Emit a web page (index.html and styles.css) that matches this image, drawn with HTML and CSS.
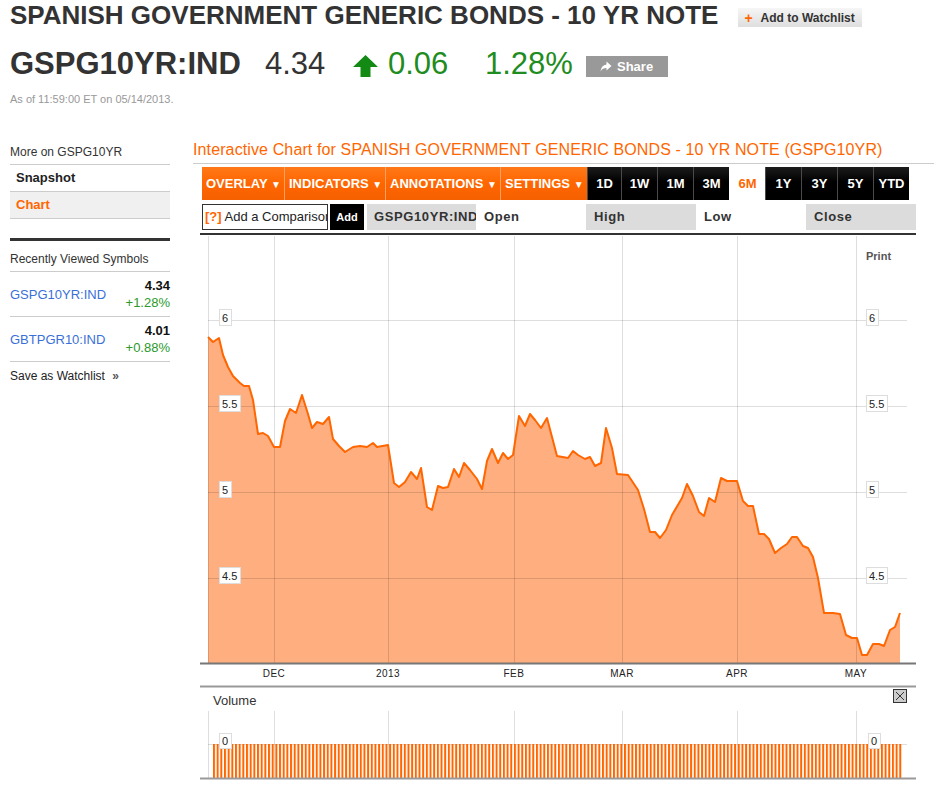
FILE: index.html
```html
<!DOCTYPE html>
<html lang="en">
<head>
  <meta charset="UTF-8">
  <meta name="viewport" content="width=device-width, initial-scale=1.0">
  <title>GSPG10YR:IND Interactive Chart</title>
  <link rel="stylesheet" href="styles.css">
</head>
<body>
  <div class="page">
    <header class="quote-head">
      <div class="title-row">
        <h1>SPANISH GOVERNMENT GENERIC BONDS - 10 YR NOTE</h1>
        <button class="watch-btn"><span class="plus">+</span>Add to Watchlist</button>
      </div>
      <div class="price-row">
        <span class="ticker">GSPG10YR:IND</span>
        <span class="last">4.34</span>
        <svg class="up-arrow" width="25" height="22" viewBox="0 0 25 22">
          <polygon points="12.5,0 25,12 17.5,12 17.5,22 7.5,22 7.5,12 0,12" fill="#138a13"/>
        </svg>
        <span class="change">0.06</span>
        <span class="pct">1.28%</span>
        <button class="share-btn">
          <svg width="12" height="11" viewBox="0 0 12 11">
            <path d="M6.5 0.5 L11.5 5 L6.5 9.5 V7 C3.8 7 2 7.8 0.5 10.5 C1 6.5 3 4 6.5 3.6 Z" fill="#fff"/>
          </svg>Share
        </button>
      </div>
      <p class="asof">As of 11:59:00 ET on 05/14/2013.</p>
    </header>

    <div class="content">
      <aside class="sidebar">
        <div class="side-head">More on GSPG10YR</div>
        <a class="side-link">Snapshot</a>
        <a class="side-link active">Chart</a>

        <div class="recent-head">Recently Viewed Symbols</div>
        <div class="recent-row">
          <a class="sym">GSPG10YR:IND</a>
          <div class="quote">
            <strong>4.34</strong>
            <span class="up">+1.28%</span>
          </div>
        </div>
        <div class="recent-row">
          <a class="sym">GBTPGR10:IND</a>
          <div class="quote">
            <strong>4.01</strong>
            <span class="up">+0.88%</span>
          </div>
        </div>
        <div class="save">Save as Watchlist <span class="raquo">&raquo;</span></div>
      </aside>

      <main class="chart-col">
        <h2 class="chart-title">Interactive Chart for SPANISH GOVERNMENT GENERIC BONDS - 10 YR NOTE (GSPG10YR)</h2>

        <div class="toolbar">
          <span class="tb-menu w-overlay">OVERLAY <i>&#9660;</i></span>
          <span class="tb-menu w-indicators">INDICATORS <i>&#9660;</i></span>
          <span class="tb-menu w-annotations">ANNOTATIONS <i>&#9660;</i></span>
          <span class="tb-menu w-settings">SETTINGS <i>&#9660;</i></span>
          <span class="tb-range narrow">1D</span>
          <span class="tb-range">1W</span>
          <span class="tb-range">1M</span>
          <span class="tb-range">3M</span>
          <span class="tb-range current">6M</span>
          <span class="tb-range">1Y</span>
          <span class="tb-range">3Y</span>
          <span class="tb-range">5Y</span>
          <span class="tb-range">YTD</span>
        </div>

        <div class="compare">
          <div class="compare-input"><span class="help">[?]</span> Add a Comparison</div>
          <span class="add-btn">Add</span>
          <span class="cell shade sym-cell">GSPG10YR:IND</span>
          <span class="cell">Open</span>
          <span class="cell shade">High</span>
          <span class="cell">Low</span>
          <span class="cell shade">Close</span>
        </div>

        <svg class="chart" width="716" height="547" viewBox="200 235 716 547">
          <defs>
            <pattern id="bars" x="213" y="0" width="3.67" height="100" patternUnits="userSpaceOnUse">
              <rect x="0" y="0" width="2" height="100" fill="#ff6600"/>
            </pattern>
          </defs>

          <!-- price area -->
          <polygon class="area" points="208,663 208,337 213,342 219,338 223,355 228,367 233,376 240,383 244,386 249,386 253,400 258,434 263,433 268,436 274,447 280,447 285,421 290,409 296,413 302,395 308,414 312,428 317,422 323,424 329,417 333,439 339,446 345,452 353,447 360,446 367,447 373,443 377,447 388,445 394,483 399,487 405,482 411,472 417,479 421,468 427,507 432,510 438,486 443,488 448,487 454,469 459,477 464,463 470,470 477,479 482,489 487,461 492,449 498,463 503,453 508,459 513,455 519,416 525,426 530,414 535,420 541,428 547,418 557,456 568,458 573,451 578,455 585,459 590,457 595,466 601,463 606,428 612,448 617,474 628,475 638,490 644,509 650,532 655,532 660,538 666,530 672,515 682,498 687,484 693,496 699,512 704,516 709,498 715,502 721,478 727,481 737,481 743,501 748,506 753,506 759,534 764,534 769,539 775,553 781,548 787,544 792,537 797,537 803,546 808,548 813,557 818,578 824,613 833,613 840,614 846,635 852,638 857,638 862,655 867,655 873,644 879,644 884,646 890,630 895,627 900,613 900,663"/>

          <!-- grid -->
          <g class="grid">
            <line x1="208.5" y1="236" x2="208.5" y2="663"/>
            <line x1="274.5" y1="236" x2="274.5" y2="663"/>
            <line x1="388.5" y1="236" x2="388.5" y2="663"/>
            <line x1="514.5" y1="236" x2="514.5" y2="663"/>
            <line x1="622.5" y1="236" x2="622.5" y2="663"/>
            <line x1="737.5" y1="236" x2="737.5" y2="663"/>
            <line x1="856.5" y1="236" x2="856.5" y2="663"/>
            <line x1="208" y1="320.5" x2="907" y2="320.5"/>
            <line x1="208" y1="406.5" x2="907" y2="406.5"/>
            <line x1="208" y1="492.5" x2="907" y2="492.5"/>
            <line x1="208" y1="578.5" x2="907" y2="578.5"/>
          </g>

          <polyline class="price" points="208,337 213,342 219,338 223,355 228,367 233,376 240,383 244,386 249,386 253,400 258,434 263,433 268,436 274,447 280,447 285,421 290,409 296,413 302,395 308,414 312,428 317,422 323,424 329,417 333,439 339,446 345,452 353,447 360,446 367,447 373,443 377,447 388,445 394,483 399,487 405,482 411,472 417,479 421,468 427,507 432,510 438,486 443,488 448,487 454,469 459,477 464,463 470,470 477,479 482,489 487,461 492,449 498,463 503,453 508,459 513,455 519,416 525,426 530,414 535,420 541,428 547,418 557,456 568,458 573,451 578,455 585,459 590,457 595,466 601,463 606,428 612,448 617,474 628,475 638,490 644,509 650,532 655,532 660,538 666,530 672,515 682,498 687,484 693,496 699,512 704,516 709,498 715,502 721,478 727,481 737,481 743,501 748,506 753,506 759,534 764,534 769,539 775,553 781,548 787,544 792,537 797,537 803,546 808,548 813,557 818,578 824,613 833,613 840,614 846,635 852,638 857,638 862,655 867,655 873,644 879,644 884,646 890,630 895,627 900,613"/>

          <!-- y labels -->
          <g class="ylabel">
            <rect x="219.5" y="309.5" width="12" height="16"/><text x="222" y="322">6</text>
            <rect x="219.5" y="395.5" width="21" height="16"/><text x="222" y="408">5.5</text>
            <rect x="219.5" y="481.5" width="12" height="16"/><text x="222" y="494">5</text>
            <rect x="219.5" y="567.5" width="21" height="16"/><text x="222" y="580">4.5</text>
            <rect x="866.5" y="309.5" width="12" height="16"/><text x="869" y="322">6</text>
            <rect x="866.5" y="395.5" width="21" height="16"/><text x="869" y="408">5.5</text>
            <rect x="866.5" y="481.5" width="12" height="16"/><text x="869" y="494">5</text>
            <rect x="866.5" y="567.5" width="21" height="16"/><text x="869" y="580">4.5</text>
          </g>
          <text class="print" x="866" y="260">Print</text>

          <!-- x axis -->
          <line class="axis" x1="200" y1="663.5" x2="916" y2="663.5"/>
          <g class="xlabel">
            <text x="274" y="677">DEC</text>
            <text x="388" y="677">2013</text>
            <text x="514" y="677">FEB</text>
            <text x="622" y="677">MAR</text>
            <text x="737" y="677">APR</text>
            <text x="856" y="677">MAY</text>
          </g>

          <!-- volume panel -->
          <line class="panel-edge" x1="200" y1="686.5" x2="916" y2="686.5"/>
          <text class="vol-title" x="213" y="705">Volume</text>
          <g class="close-box">
            <rect x="893.5" y="689.5" width="13" height="13"/>
            <path d="M896 692 L904 700 M904 692 L896 700"/>
          </g>
          <g class="grid">
            <line x1="208.5" y1="711" x2="208.5" y2="778"/>
            <line x1="274.5" y1="711" x2="274.5" y2="778"/>
            <line x1="388.5" y1="711" x2="388.5" y2="778"/>
            <line x1="514.5" y1="711" x2="514.5" y2="778"/>
            <line x1="622.5" y1="711" x2="622.5" y2="778"/>
            <line x1="737.5" y1="711" x2="737.5" y2="778"/>
            <line x1="856.5" y1="711" x2="856.5" y2="778"/>
            <line x1="208" y1="744.5" x2="907" y2="744.5"/>
          </g>
          <rect x="213" y="744" width="690" height="34" fill="url(#bars)"/>
          <g class="ylabel">
            <rect x="219.5" y="733.5" width="12" height="15"/><text x="222" y="745">0</text>
            <rect x="868.5" y="733.5" width="12" height="15"/><text x="871" y="745">0</text>
          </g>
          <line class="panel-edge" x1="200" y1="778.5" x2="916" y2="778.5"/>
        </svg>
      </main>
    </div>
  </div>
</body>
</html>
```

FILE: styles.css
```css
/* General */
body {
  margin: 0;
  font-family: 'Liberation Sans', Arial, sans-serif;
  color: #333;
  background: #fff;
}

.page {
  width: 934px;
}

/* Quote header */
.quote-head {
  padding: 0 10px;
}

.title-row {
  display: flex;
  align-items: flex-start;
}

h1 {
  margin: 0;
  font-family: 'Liberation Sans Narrow', 'Arial Narrow', 'Liberation Sans', sans-serif;
  font-size: 26px;
  line-height: 30px;
  font-weight: bold;
  color: #333;
  white-space: nowrap;
}

.watch-btn {
  margin: 8px 0 0 20px;
  height: 19px;
  width: 124px;
  padding: 0 0 0 6px;
  display: flex;
  align-items: center;
  border: none;
  background: linear-gradient(#f6f6f6, #dedede);
  font-family: 'Liberation Sans Narrow', 'Arial Narrow', 'Liberation Sans', sans-serif;
  font-size: 12px;
  font-weight: bold;
  color: #333;
}

.watch-btn .plus {
  color: #f60;
  font-size: 14px;
  margin-right: 8px;
}

.price-row {
  display: flex;
  align-items: flex-start;
  height: 36px;
  margin-top: 16px;
  font-family: 'Liberation Sans Narrow', 'Arial Narrow', 'Liberation Sans', sans-serif;
  font-size: 31px;
  line-height: 36px;
  white-space: nowrap;
}

.price-row > * {
  flex-shrink: 0;
}

.ticker {
  width: 255px;
  font-weight: bold;
  color: #333;
}

.last {
  width: 88px;
  color: #333;
}

.up-arrow {
  margin-top: 9px;
}

.change {
  width: 97px;
  margin-left: 10px;
  color: #1e8c1e;
}

.pct {
  width: 101px;
  color: #1e8c1e;
}

.share-btn {
  margin-top: 10px;
  width: 82px;
  height: 21px;
  padding: 0 0 0 14px;
  display: flex;
  align-items: center;
  gap: 5px;
  border: none;
  background: #999;
  color: #fff;
  font-family: 'Liberation Sans Narrow', 'Arial Narrow', 'Liberation Sans', sans-serif;
  font-size: 13px;
  font-weight: bold;
}

.asof {
  margin: 10px 0 0;
  font-size: 11px;
  line-height: 14px;
  color: #999;
}

/* Two columns */
.content {
  display: flex;
  align-items: flex-start;
  margin-top: 34px;
  padding-left: 10px;
}

/* Sidebar */
.sidebar {
  width: 160px;
  flex-shrink: 0;
  font-size: 12px;
}

.side-head {
  padding: 5px 0 4px;
  line-height: 15px;
  border-bottom: 1px solid #ccc;
}

.side-link {
  display: block;
  padding-left: 6px;
  height: 26px;
  line-height: 26px;
  border-bottom: 1px solid #ccc;
  font-size: 13px;
  font-weight: bold;
  color: #222;
}

.side-link.active {
  background: #f0f0f0;
  color: #f60;
}

.recent-head {
  margin-top: 19px;
  padding: 11px 0 4px;
  line-height: 15px;
  border-top: 3px solid #333;
  border-bottom: 1px solid #ccc;
}

.recent-row {
  display: flex;
  justify-content: space-between;
  align-items: center;
  height: 44px;
  border-bottom: 1px solid #ccc;
  font-size: 13px;
}

.sym {
  color: #3a6fd8;
}

.quote {
  display: flex;
  flex-direction: column;
  align-items: flex-end;
  line-height: 17px;
}

.quote strong {
  color: #111;
}

.up {
  color: #2a9a2a;
}

.save {
  padding-top: 7px;
  line-height: 15px;
  color: #222;
}

.raquo {
  margin-left: 4px;
  font-weight: bold;
  color: #555;
}

/* Chart column */
.chart-col {
  flex: 1;
  margin-left: 23px;
}

.chart-title {
  margin: 0;
  padding-bottom: 3px;
  border-bottom: 1px solid #ccc;
  font-size: 16px;
  line-height: 20px;
  font-weight: normal;
  letter-spacing: 0.12px;
  color: #f60;
  white-space: nowrap;
}

.toolbar {
  display: flex;
  height: 33px;
  margin: 3px 0 0 9px;
  font-size: 13px;
  font-weight: bold;
  line-height: 33px;
  color: #fff;
}

.tb-menu {
  box-sizing: border-box;
  padding-left: 4px;
  background: linear-gradient(#ff7818, #ff6600 50%, #f56000);
  border-right: 1px solid #ffa060;
  white-space: nowrap;
}

.tb-menu i {
  font-style: normal;
  font-size: 10px;
}

.w-overlay { width: 83px; }
.w-indicators { width: 101px; }
.w-annotations { width: 115px; }
.w-settings { width: 86px; border-right: none; }

.tb-range {
  box-sizing: border-box;
  width: 36px;
  text-align: center;
  background: linear-gradient(#1c1c1c, #000 45%);
  border-left: 1px solid #4a4a4a;
}

.tb-range.narrow {
  width: 34px;
}

.tb-range.current {
  background: #fff;
  color: #f60;
  border-left-color: #fff;
}

.compare {
  display: flex;
  height: 26px;
  margin: 4px 0 0 9px;
  line-height: 26px;
  font-size: 13px;
}

.compare-input {
  box-sizing: border-box;
  width: 126px;
  padding-left: 2px;
  border: 1px solid #333;
  line-height: 24px;
  white-space: nowrap;
  overflow: hidden;
  color: #222;
}

.help {
  color: #f60;
  font-weight: bold;
}

.add-btn {
  width: 34px;
  margin-left: 2px;
  text-align: center;
  background: #000;
  color: #fff;
  font-size: 11px;
  font-weight: bold;
}

.cell {
  box-sizing: border-box;
  width: 110px;
  padding-left: 8px;
  font-weight: bold;
  letter-spacing: 0.6px;
  color: #333;
  white-space: nowrap;
  overflow: hidden;
}

.cell.shade {
  background: #dcdcdc;
}

.sym-cell {
  width: 109px;
  margin-left: 3px;
  padding-left: 7px;
}

.chart {
  display: block;
  margin: 3px 0 0 7px;
  border-top: 2px solid #333;
  font-family: 'Liberation Sans', Arial, sans-serif;
}

/* Chart drawing */
.area {
  fill: #feae7f;
}

.price {
  fill: none;
  stroke: #ff6600;
  stroke-width: 2;
  stroke-linejoin: round;
}

.grid line {
  stroke: #000;
  stroke-opacity: 0.13;
  stroke-width: 1;
}

.ylabel rect {
  fill: #fff;
  stroke: #ddd;
}

.ylabel text {
  font-size: 11px;
  fill: #222;
}

.print {
  font-size: 11px;
  font-weight: bold;
  fill: #555;
}

.axis {
  stroke: #777;
  stroke-width: 2;
}

.xlabel text {
  font-size: 10px;
  fill: #222;
  text-anchor: middle;
  letter-spacing: 0.5px;
}

.panel-edge {
  stroke: #999;
  stroke-width: 2;
}

.vol-title {
  font-size: 13px;
  fill: #333;
}

.close-box rect {
  fill: #ccc;
  stroke: #333;
}

.close-box path {
  stroke: #333;
  stroke-width: 1;
}
```
